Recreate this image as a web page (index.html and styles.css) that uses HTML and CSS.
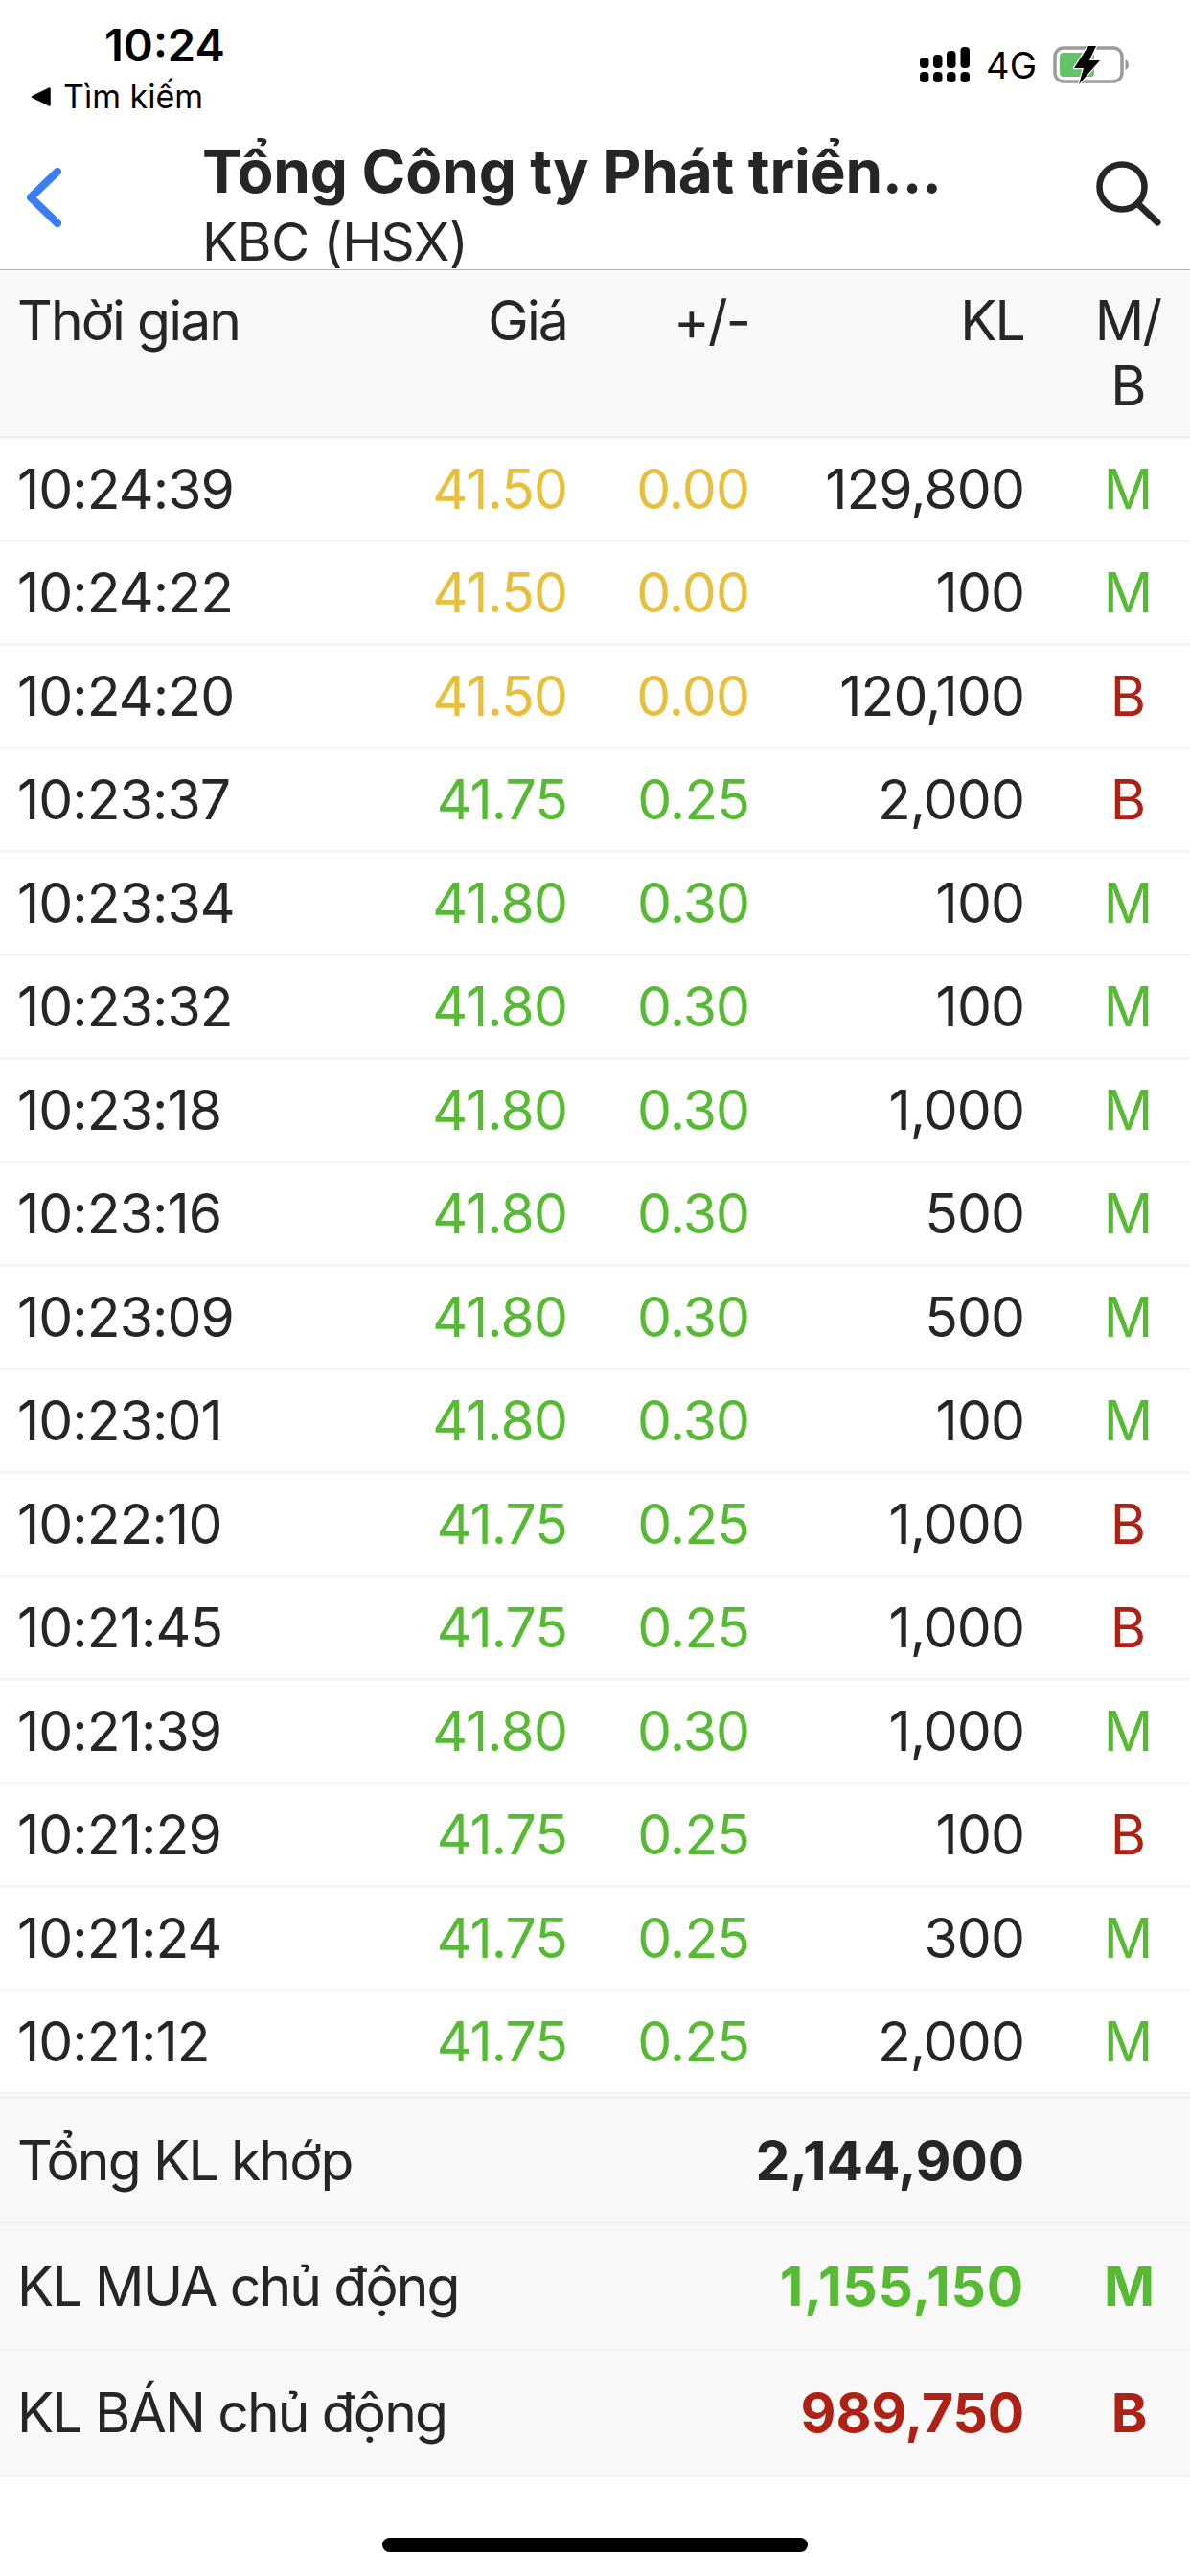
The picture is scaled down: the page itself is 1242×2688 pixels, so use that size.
FILE: index.html
```html
<!DOCTYPE html>
<html lang="vi">
<head>
<meta charset="utf-8">
<title>KBC (HSX)</title>
<link rel="stylesheet" href="styles.css">
</head>
<body>
<div class="page">
  <div class="status">
    <div class="status-left">
      <div class="clock">10:24</div>
      <div class="back-app"><svg class="back-tri" viewBox="0 0 21 20"><path d="M19.5 1.5 V18.5 L2 10 Z" fill="#000" stroke="#000" stroke-width="2.5" stroke-linejoin="round"/></svg><span>Tìm kiếm</span></div>
    </div>
    <div class="status-right">
      <svg class="signal" viewBox="0 0 52 38"><g fill="#000"><rect x="0" y="26" width="9.5" height="11" rx="4"/><rect x="14" y="26" width="9.5" height="11" rx="4"/><rect x="28" y="26" width="9.5" height="11" rx="4"/><rect x="42.500" y="26" width="9.5" height="11" rx="4"/><rect x="0" y="11" width="9.5" height="11" rx="4"/><rect x="14" y="8" width="9.5" height="14" rx="4"/><rect x="28" y="4" width="9.500" height="18" rx="4"/><rect x="42.500" y="0" width="9.5" height="22" rx="4"/></g></svg>
      <span class="net">4G</span>
      <svg class="battery" viewBox="0 0 80 42"><rect x="2" y="3" width="70" height="35" rx="9" fill="none" stroke="#9b9b9b" stroke-width="3.500"/><rect x="7" y="8" width="36" height="25" rx="4" fill="#62c466"/><path d="M75.500 15 C78 16 79 18 79 20.500 C79 23 78 25 75.500 26 Z" fill="#9b9b9b"/><path d="M37 1 L22 24 H32 L27 41 L49 16 H38 L45 1 Z" fill="#000" stroke="#fff" stroke-width="2.500" stroke-linejoin="round" paint-order="stroke"/></svg>
    </div>
  </div>
  <div class="nav">
    <svg class="chev" viewBox="0 0 36 62"><path d="M32 4 L4 31 L32 58" fill="none" stroke="#3a7df5" stroke-width="8" stroke-linecap="round" stroke-linejoin="round"/></svg>
    <div class="titles">
      <div class="title">Tổng Công ty Phát triển...</div>
      <div class="subtitle">KBC (HSX)</div>
    </div>
    <svg class="search" viewBox="0 0 68 68"><circle cx="27" cy="27" r="23.500" fill="none" stroke="#262626" stroke-width="6.500"/><path d="M44 45 L64 64" fill="none" stroke="#262626" stroke-width="7" stroke-linecap="round"/></svg>
  </div>
  <div class="grid head">
    <div>Thời gian</div><div class="r">Giá</div><div class="r">+/-</div><div class="r">KL</div><div class="c">M/<br>B</div>
  </div>
  <div class="grid row"><div>10:24:39</div><div class="r ref">41.50</div><div class="r ref">0.00</div><div class="r">129,800</div><div class="c up">M</div></div>
  <div class="grid row"><div>10:24:22</div><div class="r ref">41.50</div><div class="r ref">0.00</div><div class="r">100</div><div class="c up">M</div></div>
  <div class="grid row"><div>10:24:20</div><div class="r ref">41.50</div><div class="r ref">0.00</div><div class="r">120,100</div><div class="c down">B</div></div>
  <div class="grid row"><div>10:23:37</div><div class="r up">41.75</div><div class="r up">0.25</div><div class="r">2,000</div><div class="c down">B</div></div>
  <div class="grid row"><div>10:23:34</div><div class="r up">41.80</div><div class="r up">0.30</div><div class="r">100</div><div class="c up">M</div></div>
  <div class="grid row"><div>10:23:32</div><div class="r up">41.80</div><div class="r up">0.30</div><div class="r">100</div><div class="c up">M</div></div>
  <div class="grid row"><div>10:23:18</div><div class="r up">41.80</div><div class="r up">0.30</div><div class="r">1,000</div><div class="c up">M</div></div>
  <div class="grid row"><div>10:23:16</div><div class="r up">41.80</div><div class="r up">0.30</div><div class="r">500</div><div class="c up">M</div></div>
  <div class="grid row"><div>10:23:09</div><div class="r up">41.80</div><div class="r up">0.30</div><div class="r">500</div><div class="c up">M</div></div>
  <div class="grid row"><div>10:23:01</div><div class="r up">41.80</div><div class="r up">0.30</div><div class="r">100</div><div class="c up">M</div></div>
  <div class="grid row"><div>10:22:10</div><div class="r up">41.75</div><div class="r up">0.25</div><div class="r">1,000</div><div class="c down">B</div></div>
  <div class="grid row"><div>10:21:45</div><div class="r up">41.75</div><div class="r up">0.25</div><div class="r">1,000</div><div class="c down">B</div></div>
  <div class="grid row"><div>10:21:39</div><div class="r up">41.80</div><div class="r up">0.30</div><div class="r">1,000</div><div class="c up">M</div></div>
  <div class="grid row"><div>10:21:29</div><div class="r up">41.75</div><div class="r up">0.25</div><div class="r">100</div><div class="c down">B</div></div>
  <div class="grid row"><div>10:21:24</div><div class="r up">41.75</div><div class="r up">0.25</div><div class="r">300</div><div class="c up">M</div></div>
  <div class="grid row"><div>10:21:12</div><div class="r up">41.75</div><div class="r up">0.25</div><div class="r">2,000</div><div class="c up">M</div></div>
  <div class="summary">
    <div class="sum-row"><div class="sum-label">Tổng KL khớp</div><div class="sum-val">2,144,900</div><div class="sum-tag"></div></div>
    <div class="sum-row"><div class="sum-label">KL MUA chủ động</div><div class="sum-val up">1,155,150</div><div class="sum-tag up">M</div></div>
    <div class="sum-row"><div class="sum-label">KL BÁN chủ động</div><div class="sum-val down">989,750</div><div class="sum-tag down">B</div></div>
  </div>
  <div class="home-bar"></div>
</div>
</body>
</html>
```
FILE: styles.css
```css
* { box-sizing: border-box; }
html, body { margin: 0; padding: 0; background: #fff; }
body { font-family: Inter, "Noto Sans", sans-serif; color: #262626; }
.page { width: 1242px; height: 2688px; overflow: hidden; background: #fff; }

.status { height: 130px; display: flex; justify-content: space-between; padding: 20px 63px 0 32px; color: #000; }
.status-left { display: flex; flex-direction: column; }
.clock { font-size: 47px; line-height: 54px; font-weight: 600; margin-left: 77px; }
.back-app { display: flex; align-items: center; gap: 13px; margin-top: 7px; font-size: 34px; line-height: 40px; }
.back-tri { width: 21px; height: 20px; }
.status-right { display: flex; align-items: flex-start; padding-top: 29px; }
.signal { width: 52px; height: 38px; }
.net { font-size: 38px; line-height: 38px; margin-left: 17px; }
.battery { width: 80px; height: 42px; margin-left: 17px; margin-top: -2px; }

.nav { height: 152px; display: flex; align-items: flex-start; padding: 0 30px 0 28px; border-bottom: 1px solid #aaa; overflow: hidden; }
.chev { width: 36px; height: 62px; margin-top: 45px; flex: none; }
.titles { flex: 1; margin-left: 147px; padding-top: 13px; }
.title { font-size: 62px; line-height: 72px; font-weight: 700; white-space: nowrap; letter-spacing: -0.1px; }
.subtitle { font-size: 55px; line-height: 62px; margin-top: 6px; font-weight: 400; letter-spacing: -0.5px; }
.search { width: 68px; height: 68px; margin-top: 38px; flex: none; }

.grid { display: grid; grid-template-columns: 264px 310px 190px 287px 51px 114px; padding-left: 18px; font-size: 57px; }
.grid > :nth-child(5) { grid-column: 6; }
.r { text-align: right; }
.c { text-align: center; }
.head { height: 176px; padding-top: 19px; line-height: 68px; background: #f8f8f8; border-bottom: 3px solid #f0f0f0; letter-spacing: -1.85px; }
.row { height: 108px; align-items: center; border-bottom: 3px solid #f4f4f4; line-height: 64px; letter-spacing: -0.9px; }
.ref { color: #e9be3b; }
.up { color: #56ba33; }
.down { color: #ae2216; }

.summary { margin-top: 1px; background: #f8f8f8; border-top: 3px solid #f0f0f0; }
.sum-row { height: 132px; display: grid; grid-template-columns: 1fr auto 173px; align-items: center; padding-left: 18px; font-size: 57px; border-bottom: 3px solid #f3f3f3; }
.sum-row:first-child { height: 131px; }
.sum-label { letter-spacing: -1.85px; }
.sum-val { font-weight: 700; text-align: right; letter-spacing: -0.15px; }
.sum-val.up { letter-spacing: 0.8px; }
.sum-tag { font-weight: 700; text-align: center; padding-left: 50px; padding-right: 4px; }

.home-bar { width: 444px; height: 15px; border-radius: 8px; background: #000; margin: 63px auto 0; }
```
